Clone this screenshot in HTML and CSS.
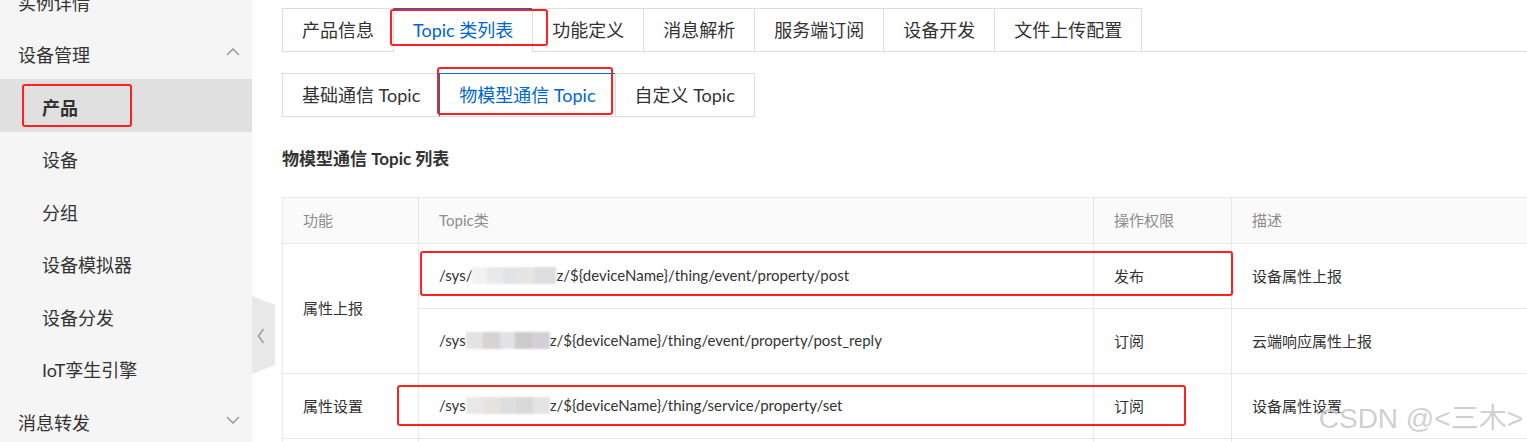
FILE: index.html
```html
<!DOCTYPE html>
<html lang="zh-CN">
<head>
    <meta charset="UTF-8">
    <meta name="viewport" content="width=device-width, initial-scale=1.0">
    <title>产品 - Topic 类列表</title>
    <link rel="stylesheet" href="styles.css">
</head>
<body>

<div class="layout">
    <aside class="sidebar">
        <ul class="menu">
            <li class="menu-group">实例详情</li>
            <li class="menu-group">设备管理
                <svg class="chev" viewBox="0 0 14 8"><path d="M1 7 L7 1 L13 7" /></svg>
            </li>
            <li class="menu-item active">产品</li>
            <li class="menu-item">设备</li>
            <li class="menu-item">分组</li>
            <li class="menu-item">设备模拟器</li>
            <li class="menu-item">设备分发</li>
            <li class="menu-item">IoT孪生引擎</li>
            <li class="menu-group">消息转发
                <svg class="chev" viewBox="0 0 14 8"><path d="M1 1 L7 7 L13 1" /></svg>
            </li>
        </ul>
    </aside>

    <div class="collapse-tab">
        <svg viewBox="0 0 23 78" width="23" height="78">
            <polygon points="0,0 23,9 23,69 0,78" fill="#e8e8e8" />
            <path d="M11.5 33 L6.5 40 L11.5 47" fill="none" stroke="#a8a8a8" stroke-width="2" />
        </svg>
    </div>

    <main class="content">
        <div class="tabs">
            <div class="tab">产品信息</div>
            <div class="tab active">Topic 类列表</div>
            <div class="tab">功能定义</div>
            <div class="tab">消息解析</div>
            <div class="tab">服务端订阅</div>
            <div class="tab">设备开发</div>
            <div class="tab">文件上传配置</div>
        </div>

        <div class="subtabs">
            <div class="subtab">基础通信 Topic</div>
            <div class="subtab active">物模型通信 Topic</div>
            <div class="subtab">自定义 Topic</div>
        </div>

        <h3 class="section-title">物模型通信 Topic 列表</h3>

        <table class="topic-table">
            <colgroup>
                <col class="col-func">
                <col class="col-topic">
                <col class="col-perm">
                <col class="col-desc">
            </colgroup>
            <thead>
                <tr>
                    <th>功能</th>
                    <th>Topic类</th>
                    <th>操作权限</th>
                    <th>描述</th>
                </tr>
            </thead>
            <tbody>
                <tr>
                    <td rowspan="2">属性上报</td>
                    <td>/sys/<span class="blur b1"></span>z/${deviceName}/thing/event/property/post</td>
                    <td>发布</td>
                    <td>设备属性上报</td>
                </tr>
                <tr>
                    <td>/sys<span class="blur b2"></span>z/${deviceName}/thing/event/property/post_reply</td>
                    <td>订阅</td>
                    <td>云端响应属性上报</td>
                </tr>
                <tr>
                    <td>属性设置</td>
                    <td>/sys<span class="blur b3"></span>z/${deviceName}/thing/service/property/set</td>
                    <td>订阅</td>
                    <td>设备属性设置</td>
                </tr>
                <tr>
                    <td>事件上报</td>
                    <td>/sys/<span class="blur b1"></span>z/${deviceName}/thing/event/${tsl.event.identifier}/post</td>
                    <td>发布</td>
                    <td>设备事件上报</td>
                </tr>
            </tbody>
        </table>
    </main>

    <!-- annotation boxes from the screenshot -->
    <div class="mark mark-tab"></div>
    <div class="mark mark-product"></div>
    <div class="mark mark-subtab"></div>
    <div class="mark mark-row1"></div>
    <div class="mark mark-row3"></div>

    <div class="watermark">CSDN @&lt;三木&gt;</div>
</div>

</body>
</html>
```

FILE: styles.css
```css
* {
    box-sizing: border-box;
}
html, body {
    margin: 0;
    height: 100%;
}
body {
    font-family: Lato, "Noto Sans CJK SC", sans-serif;
    color: #333;
    background: #fff;
    overflow: hidden;
}
.layout {
    position: relative;
    display: flex;
    height: 442px;
    overflow: hidden;
}

/* sidebar */
.sidebar {
    width: 252px;
    flex: none;
    background: #f5f5f5;
}
.menu {
    list-style: none;
    margin: -26px 0 0;
    padding: 0;
}
.menu li {
    height: 52.5px;
    display: flex;
    align-items: center;
    font-size: 18px;
    padding-top: 3px;
}
.menu-group {
    justify-content: space-between;
    padding: 0 12px 0 18px;
}
.menu-item {
    padding-left: 42px;
}
.menu-item.active {
    background: #e0e0e0;
    font-weight: bold;
}
.chev {
    width: 14px;
    height: 8px;
    fill: none;
    stroke: #9a9a9a;
    stroke-width: 1.5;
    margin-top: -4px;
}

.collapse-tab {
    position: absolute;
    left: 252px;
    top: 296px;
    width: 23px;
    height: 78px;
}
.collapse-tab svg {
    display: block;
}

/* main */
.content {
    flex: 1;
    min-width: 0;
    padding: 8px 0 0 30px;
}
.tabs {
    display: flex;
    border-bottom: 1px solid #dedede;
    padding-left: 1px;
}
.tab {
    height: 43px;
    line-height: 42px;
    padding: 0 19px;
    font-size: 18px;
    border: 1px solid #dedede;
    border-bottom: none;
    margin-left: -1px;
    white-space: nowrap;
}
.tab.active {
    height: 44px;
    margin-bottom: -1px;
    background: #fff;
    border-top: 2px solid #0070cc;
    line-height: 41px;
    color: #0066cc;
}

.subtabs {
    display: inline-flex;
    margin-top: 21px;
    padding-left: 1px;
}
.subtab {
    height: 44px;
    line-height: 43px;
    padding: 0 19px;
    font-size: 18px;
    border: 1px solid #dedede;
    margin-left: -1px;
    white-space: nowrap;
}
.subtab.active {
    border-color: #0070cc #0070cc #dedede;
    color: #0066cc;
}

.section-title {
    font-size: 17px;
    font-weight: bold;
    margin: 30px 0 0;
    line-height: 24px;
}

.topic-table {
    margin-top: 26px;
    border-collapse: collapse;
    width: 1400px;
    font-size: 15px;
    table-layout: fixed;
}
.col-func { width: 136px; }
.col-topic { width: 675px; }
.col-perm { width: 138px; }
.topic-table th,
.topic-table td {
    border: 1px solid #e8e8e8;
    padding: 0 20px 2px;
    text-align: left;
    white-space: nowrap;
}
.topic-table th {
    height: 46px;
    background: #fafafa;
    font-weight: normal;
    color: #8c8c8c;
}
.topic-table td {
    height: 65px;
}
.blur {
    display: inline-block;
    width: 84px;
    height: 17px;
    vertical-align: -3px;
    filter: blur(1px);
}
.b1 {
    background: linear-gradient(90deg, #f2f2f2 0 18%, #e9e9e9 18% 38%, #dfe4e8 38% 55%, #e7e4e1 55% 75%, #dcdde0 75% 100%);
}
.b2 {
    background: linear-gradient(90deg, #e3e3e3 0 20%, #d6d3d0 20% 40%, #dfe3e6 40% 58%, #cdcbc9 58% 78%, #d2cfd8 78% 100%);
}
.b3 {
    background: linear-gradient(90deg, #e8e8e8 0 22%, #e6e2dd 22% 42%, #dcdfe2 42% 60%, #d9d9d9 60% 80%, #e4e4e4 80% 100%);
}

/* red annotation boxes */
.mark {
    position: absolute;
    border: 2px solid #ff2020;
    border-radius: 3px;
}
.mark-tab { left: 390px; top: 9px; width: 158px; height: 37px; }
.mark-product { left: 22px; top: 84px; width: 110px; height: 43px; }
.mark-subtab { left: 437px; top: 67px; width: 176px; height: 48px; }
.mark-row1 { left: 420px; top: 251px; width: 813px; height: 45px; }
.mark-row3 { left: 397px; top: 385px; width: 789px; height: 41px; }

.watermark {
    position: absolute;
    right: 4px;
    top: 396px;
    font-family: "Liberation Sans", "Noto Sans CJK SC", sans-serif;
    font-size: 28px;
    color: rgba(175, 175, 175, 0.6);
    text-shadow: 0 0 1px rgba(255, 255, 255, 0.8);
    white-space: nowrap;
}
```
